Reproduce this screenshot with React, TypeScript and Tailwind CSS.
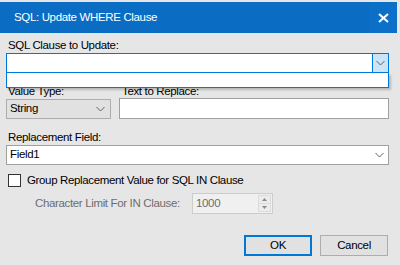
const Chevron = ({ color = '#606060' }: { color?: string }) => (
  <svg width="9" height="6" viewBox="0 0 9 6">
    <polyline points="0.5,1 4.5,5 8.5,1" fill="none" stroke={color} strokeWidth="1" />
  </svg>
);

export default function App() {
  return (
    <div className="w-[400px] h-[265px] bg-[#e6e6e6] pt-[2px] pr-[3px] font-['Liberation_Sans',Arial,sans-serif] text-[11.5px] tracking-[-0.35px] text-black overflow-hidden">
      {/* title bar */}
      <div className="h-[31px] bg-[#0b6cc4] flex items-center justify-between pl-[14px]">
        <span className="text-white leading-none">SQL: Update WHERE Clause</span>
        <div className="w-[28px] h-full flex items-center justify-center bg-[#0d70c8]">
          <svg width="11" height="10" viewBox="0 0 11 10">
            <line x1="1" y1="1" x2="10" y2="9" stroke="white" strokeWidth="2" />
            <line x1="10" y1="1" x2="1" y2="9" stroke="white" strokeWidth="2" />
          </svg>
        </div>
      </div>

      <div className="pl-[6px] pr-[8px] flex flex-col">
        <div className="mt-[4px] h-[16px] pl-[2px] leading-[16px]">SQL Clause to Update:</div>

        {/* open combo box */}
        <div className="relative h-[20px] w-[383px]">
          <div className="h-full flex border border-[#0078d7] bg-white">
            <div className="flex-1" />
            <div className="w-[16px] h-full bg-[#cce4f7] border-l border-[#0078d7] flex items-center justify-center">
              <Chevron />
            </div>
          </div>
          <div className="absolute left-0 top-full w-full h-[15px] bg-white border border-t-0 border-[#0078d7] shadow-[2px_2px_2px_rgba(0,0,0,0.2)] z-10" />
        </div>

        {/* value type + text to replace */}
        <div className="mt-[10px] flex gap-[8px]">
          <div className="w-[105px] flex flex-col">
            <div className="h-[16px] pl-[2px] leading-[16px]">Value Type:</div>
            <div className="h-[20px] flex items-center justify-between border border-[#adadad] bg-[#e1e1e1] pl-[3px] pr-[5px]">
              <span>String</span>
              <Chevron />
            </div>
          </div>
          <div className="flex-1 flex flex-col">
            <div className="h-[16px] pl-[3px] leading-[16px]">Text to Replace:</div>
            <div className="h-[21px] -mt-[1px] border border-[#a0a0a0] bg-white" />
          </div>
        </div>

        <div className="mt-[10px] h-[16px] pl-[2px] leading-[16px]">Replacement Field:</div>
        <div className="h-[20px] w-[383px] flex items-center justify-between border border-[#a0a0a0] bg-white pl-[3px] pr-[4px]">
          <span>Field1</span>
          <Chevron />
        </div>

        {/* group checkbox */}
        <div className="mt-[7px] h-[16px] flex items-center gap-[6px] pl-[2px]">
          <div className="w-[13px] h-[13px] border border-[#333333] bg-white" />
          <span className="leading-[16px]">Group Replacement Value for SQL IN Clause</span>
        </div>

        {/* char limit */}
        <div className="mt-[5px] flex items-center">
          <span className="w-[186px] pl-[29px] whitespace-nowrap text-[#6d6d6d]">Character Limit For IN Clause:</span>
          <div className="w-[81px] h-[21px] flex border border-[#cccccc] bg-[#f0f0f0]">
            <span className="flex-1 pl-[3px] leading-[19px] text-[#6d6d6d]">1000</span>
            <div className="w-[14px] flex flex-col py-[1px] pr-[1px]">
              <div className="flex-1 flex items-center justify-center border border-[#dcdcdc] bg-[#ececec]">
                <svg width="5" height="3" viewBox="0 0 5 3">
                  <polygon points="0,3 2.5,0 5,3" fill="#8a8a8a" />
                </svg>
              </div>
              <div className="flex-1 flex items-center justify-center border border-t-0 border-[#dcdcdc] bg-[#ececec]">
                <svg width="5" height="3" viewBox="0 0 5 3">
                  <polygon points="0,0 2.5,3 5,0" fill="#8a8a8a" />
                </svg>
              </div>
            </div>
          </div>
        </div>

        {/* buttons */}
        <div className="mt-[21px] flex justify-end gap-[8px] pr-[1px]">
          <button className="w-[68px] h-[21px] border-2 border-[#0078d7] bg-[#e1e1e1] leading-none">OK</button>
          <button className="w-[68px] h-[21px] border border-[#adadad] bg-[#e1e1e1] leading-none">Cancel</button>
        </div>
      </div>
    </div>
  );
}
